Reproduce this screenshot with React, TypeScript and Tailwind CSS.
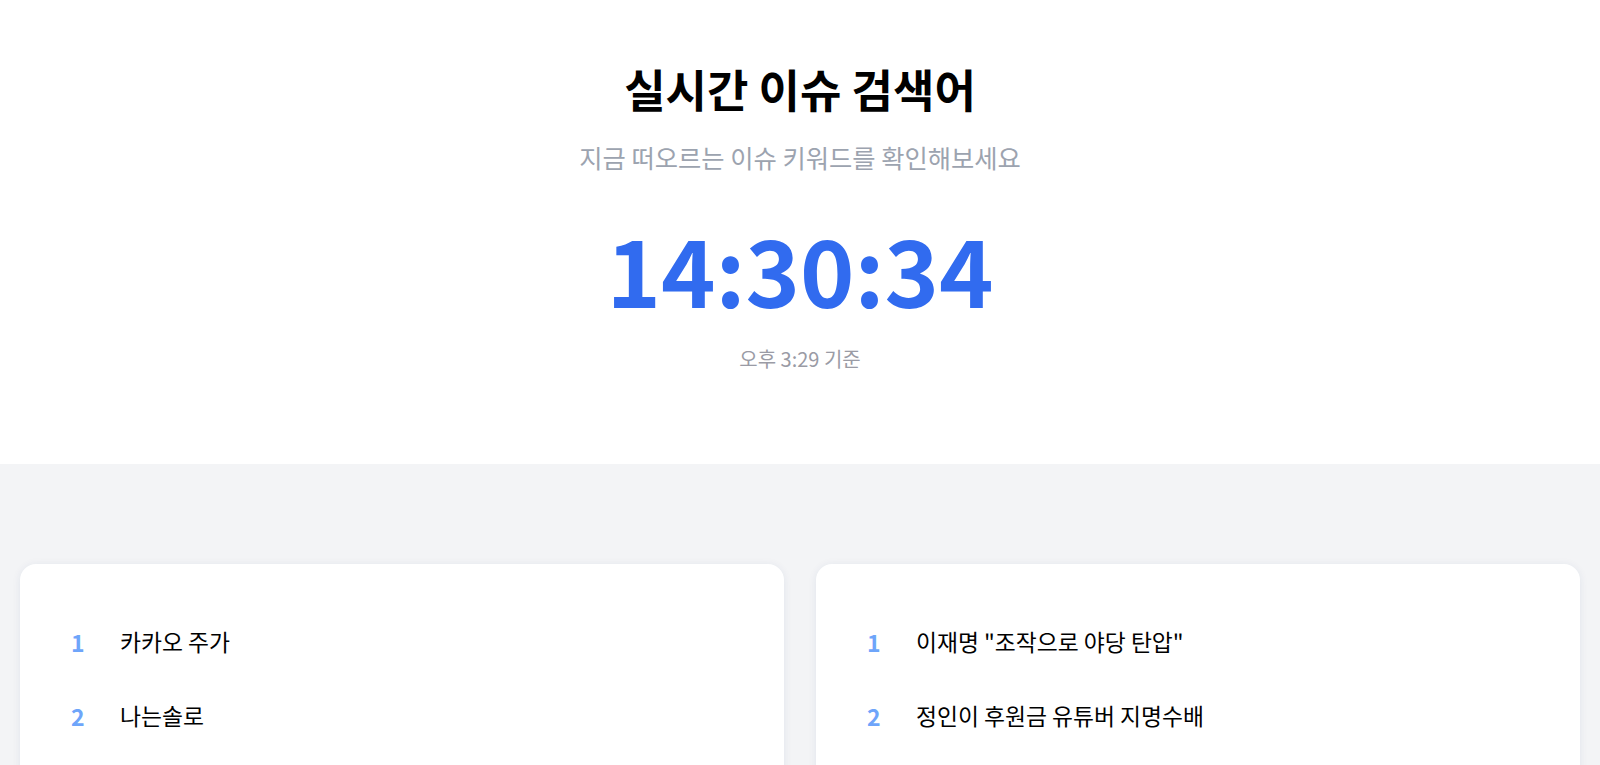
const left = ['카카오 주가', '나는솔로', '날씨', '환율'];
const right = ['이재명 "조작으로 야당 탄압"', '정인이 후원금 유튜버 지명수배', '코스피', '로또'];

function KeywordCard({ items }: { items: string[] }) {
  return (
    <div className="bg-white rounded-2xl shadow-[0_1px_8px_rgba(30,50,110,0.08)] pl-[51px] pr-8 pt-[41px] pb-8">
      <ul className="flex flex-col">
        {items.map((kw, i) => (
          <li key={kw} className="flex items-center h-[74px]">
            <span className="w-[49px] text-[23px] leading-8 font-bold text-[#6ea5fa]">{i + 1}</span>
            <span className="text-[22.8px] leading-8 text-black">{kw}</span>
          </li>
        ))}
      </ul>
    </div>
  );
}

export default function App() {
  return (
    <div className="min-h-screen bg-[#f3f4f6] font-['Noto_Sans_CJK_KR','Noto_Sans',sans-serif]">
      <section className="bg-white h-[464px] flex flex-col items-center pt-[62px]">
        <h1 className="text-[45px] leading-[54px] font-bold text-black">실시간 이슈 검색어</h1>
        <p className="mt-[23px] text-[25.3px] leading-[36px] text-[#9ca3af]">지금 떠오르는 이슈 키워드를 확인해보세요</p>
        <div className="mt-[47px] text-[92.4px] leading-none font-bold text-[#316bef]">14:30:34</div>
        <p className="mt-[31px] text-[20px] leading-[28px] text-[#9a9ba5]">오후 3:29 기준</p>
      </section>
      <main className="grid grid-cols-2 gap-8 px-5 pt-[100px] pb-10">
        <KeywordCard items={left} />
        <KeywordCard items={right} />
      </main>
    </div>
  );
}
